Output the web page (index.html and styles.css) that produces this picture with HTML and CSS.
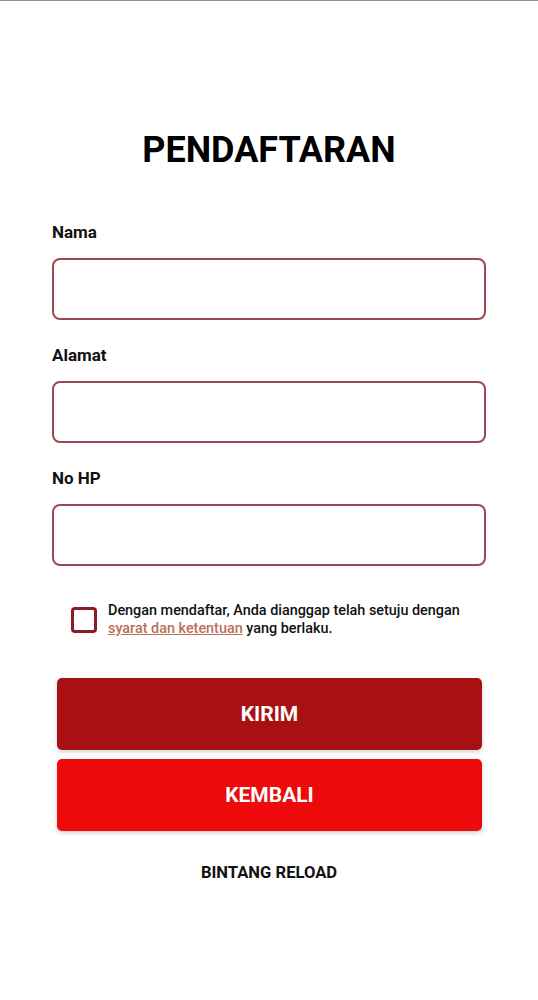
FILE: index.html
```html
<!DOCTYPE html>
<html lang="id">
<head>
<meta charset="utf-8">
<title>Pendaftaran</title>
<link rel="stylesheet" href="styles.css">
</head>
<body>
<div class="topline"></div>
<main class="page">
  <h1 class="title">PENDAFTARAN</h1>
  <form class="form">
    <label class="label" for="nama">Nama</label>
    <input class="input" id="nama" type="text">
    <label class="label" for="alamat">Alamat</label>
    <input class="input" id="alamat" type="text">
    <label class="label" for="hp">No HP</label>
    <input class="input" id="hp" type="text">
    <div class="agree">
      <span class="checkbox"></span>
      <p class="agree-text">Dengan mendaftar, Anda dianggap telah setuju dengan <a class="link" href="#">syarat dan ketentuan</a> yang berlaku.</p>
    </div>
    <div class="buttons">
      <button type="button" class="btn btn-primary">KIRIM</button>
      <button type="button" class="btn btn-secondary">KEMBALI</button>
    </div>
  </form>
  <p class="footer">BINTANG RELOAD</p>
</main>
</body>
</html>
```
FILE: styles.css
```css
* { box-sizing: border-box; }
html, body { margin: 0; padding: 0; background: #ffffff; }
body {
  font-family: Roboto, "Liberation Sans", Arial, sans-serif;
  color: #111111;
  width: 538px;
}
.topline { height: 1px; background: #9a8a8c; }
.page { display: flex; flex-direction: column; }
.title {
  margin: 128px 0 0;
  text-align: center;
  font-size: 36px;
  line-height: 42px;
  font-weight: 700;
  color: #000;
  letter-spacing: 0;
}
.form {
  display: flex;
  flex-direction: column;
  padding: 0 52px;
  margin-top: 51px;
}
.label {
  font-size: 17px;
  line-height: 20px;
  font-weight: 700;
  color: #111;
  margin-bottom: 16px;
}
.input {
  height: 62px;
  width: 100%;
  border: 2px solid #9c4a52;
  border-radius: 8px;
  background: #fff;
  margin: 0 0 25px;
  outline: none;
}
.input:last-of-type { margin-bottom: 0; }
.agree {
  display: flex;
  align-items: center;
  gap: 11px;
  margin: 36px 0 0 19px;
}
.checkbox {
  flex: none;
  width: 26px;
  height: 26px;
  border: 3px solid #8e1c24;
  border-radius: 4px;
}
.agree-text {
  margin: 0;
  width: 368px;
  font-size: 14.4px;
  line-height: 18px;
  font-weight: 500;
  color: #111;
}
.link { color: #b87058; text-decoration: underline; }
.buttons {
  display: flex;
  flex-direction: column;
  gap: 9px;
  margin: 40px 4px 0 5px;
}
.btn {
  height: 72px;
  border: none;
  border-radius: 5px;
  color: #fff;
  font-family: Roboto, "Liberation Sans", Arial, sans-serif;
  font-size: 21px;
  font-weight: 700;
  box-shadow: 0 2px 4px rgba(0,0,0,0.18);
}
.btn-primary { background: #a81014; }
.btn-secondary { background: #ee0a0a; }
.footer {
  margin: 32px 0 0;
  text-align: center;
  font-size: 16.6px;
  line-height: 20px;
  font-weight: 700;
  color: #111;
}
```
